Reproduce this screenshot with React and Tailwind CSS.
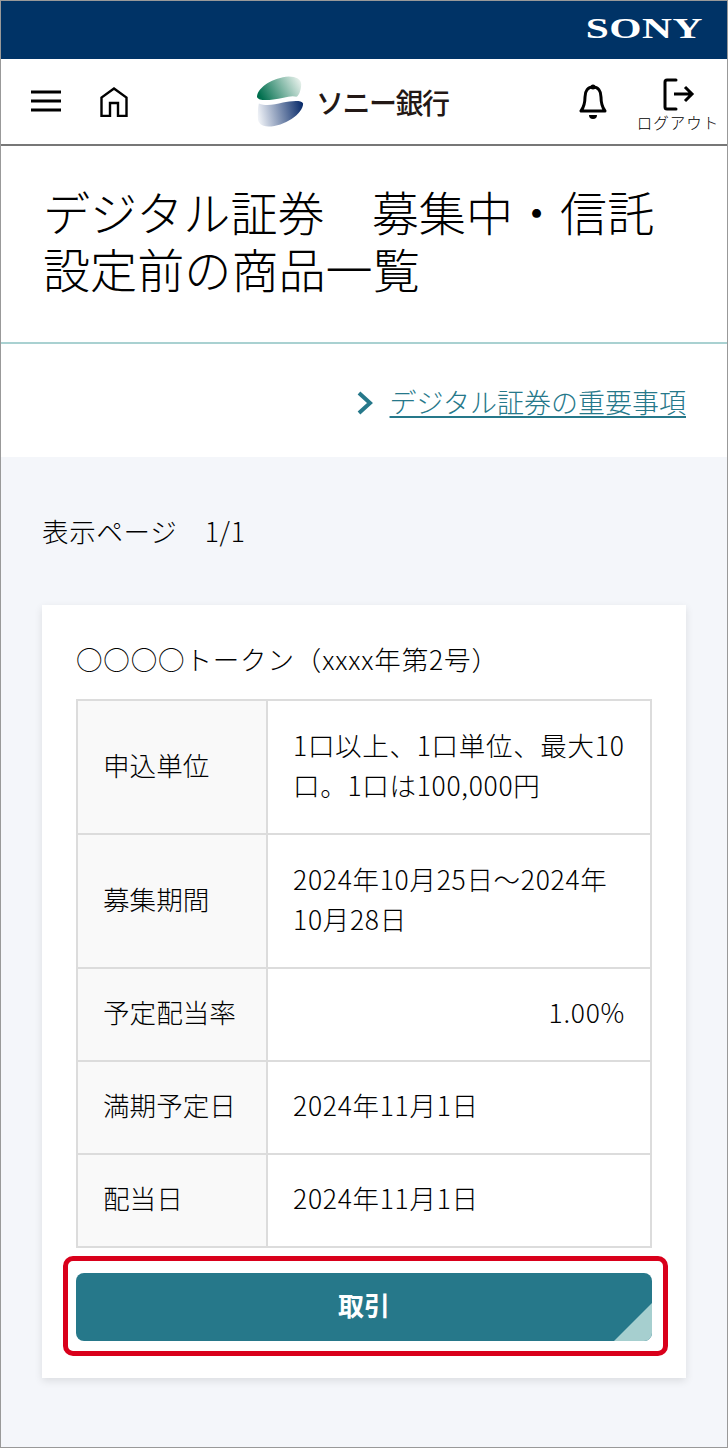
import React from 'react'

const rows = [
  { label: '申込単位', value: '1口以上、1口単位、最大10口。1口は100,000円', h: 'h-[134px]' },
  { label: '募集期間', value: '2024年10月25日～2024年10月28日', h: 'h-[134px]' },
  { label: '予定配当率', value: '1.00%', h: 'h-[93px]', right: true },
  { label: '満期予定日', value: '2024年11月1日', h: 'h-[93px]' },
  { label: '配当日', value: '2024年11月1日', h: 'h-[93px]' },
]

const BankLogo = () => (
  <svg width="50" height="51" viewBox="0 0 52 52">
    <defs>
      <linearGradient id="logoGreen" x1="0" y1="0.6" x2="1" y2="0.3">
        <stop offset="0" stopColor="#006f4e" />
        <stop offset="1" stopColor="#e4efe9" />
      </linearGradient>
      <linearGradient id="logoBlue" x1="0" y1="0.5" x2="1" y2="0.4">
        <stop offset="0" stopColor="#eef1f6" />
        <stop offset="1" stopColor="#0b2d6b" />
      </linearGradient>
    </defs>
    <path d="M1 21C2 11 18 1 34 0c8 0 13 3 13 8 0 5-2 12-5 13-6-2-15 2-24 3C10 25 2 25 1 21z" fill="url(#logoGreen)" />
    <path d="M3 28c8 3 16 1 25-1 7-1 19-3 21 1 0 11-20 24-36 24-8 0-11-4-11-9 0-6 0-12 1-15z" fill="url(#logoBlue)" />
  </svg>
)

export default function App() {
  return (
    <div className="w-[728px] h-[1448px] border border-[#999] bg-[#f4f6fa] text-black font-['Noto_Sans_CJK_JP','Noto_Sans',sans-serif] font-light overflow-hidden">
      {/* Sony bar */}
      <div className="h-[58px] bg-[#003366] flex items-center justify-end pr-[24px] pb-[3px]">
        <span className="font-['Liberation_Serif',serif] font-bold text-[29px] leading-none text-white scale-x-[1.43] origin-right tracking-[0.3px]">SONY</span>
      </div>

      {/* Nav */}
      <div className="h-[87px] bg-white border-b-2 border-[#777] flex items-center relative">
        <svg className="ml-[29px] -mt-[2px]" width="32" height="24" viewBox="0 0 32 24">
          <path d="M1 3h30M1 12h30M1 21h30" stroke="#000" strokeWidth="3" />
        </svg>
        <svg className="ml-[38px] mt-[1px]" width="28" height="30" viewBox="0 0 28 30">
          <path d="M1.5 29V10.500L14 1.500l12.500 9V29H18V16h-8v13z" fill="none" stroke="#000" strokeWidth="2.400" />
        </svg>
        <div className="ml-[128px] flex items-center">
          <BankLogo />
          <span className="ml-[10px] text-[28px] font-medium leading-none text-[#231815] tracking-[-1.500px]">ソニー銀行</span>
        </div>
        <svg className="ml-[130px] mt-[1px]" width="28" height="36" viewBox="0 0 28 36">
          <path d="M14 3c-5 0-8 4-8 10 0 6-1 10-4 14h24c-3-4-4-8-4-14 0-6-3-10-8-10z" fill="none" stroke="#000" strokeWidth="3" strokeLinejoin="round" />
          <circle cx="14" cy="3" r="2.500" fill="#000" />
          <path d="M10 31h8a4 4 0 0 1-8 0z" fill="#000" />
        </svg>
        <div className="absolute right-[8px] top-[19px] w-[82px] flex flex-col items-center">
          <svg className="ml-[2px]" width="32" height="33" viewBox="0 0 32 33">
            <path d="M13 2H4a2 2 0 0 0-2 2v25a2 2 0 0 0 2 2h9" fill="none" stroke="#000" strokeWidth="3" strokeLinecap="round" />
            <path d="M11 16h18M22 9l7 7-7 7" fill="none" stroke="#000" strokeWidth="3" />
          </svg>
          <span className="text-[15.500px] leading-none mt-[4px] tracking-[1px] whitespace-nowrap">ログアウト</span>
        </div>
      </div>

      {/* Title */}
      <div className="h-[198px] bg-white border-b-2 border-[#a9d1d1] pt-[36px] pl-[42px]">
        <h1 className="text-[47.100px] leading-[57px] font-light w-[640px]">デジタル証券　募集中・信託設定前の商品一覧</h1>
      </div>

      {/* Link */}
      <div className="h-[113px] bg-white flex items-start justify-end pr-[41px] pt-[39px]">
        <svg className="mt-[7px] mr-[16px]" width="18" height="26" viewBox="0 0 18 26">
          <path d="M3 3l11 10L3 23" fill="none" stroke="#26788a" strokeWidth="4" />
        </svg>
        <a className="text-[27px] leading-[38px] text-[#26788a] underline underline-offset-[3px] decoration-2">デジタル証券の重要事項</a>
      </div>

      {/* Page info + card */}
      <div className="px-[41px] pt-[54px]">
        <p className="text-[26.500px] leading-[40px] tracking-[0.700px]">表示ページ　1/1</p>
        <div className="mt-[54px] bg-white shadow-[0_3px_8px_rgba(0,0,0,0.1)] h-[773px] px-[34px] pt-[34px]">
          <p className="text-[26.500px] leading-[40px] mb-[20px] tracking-[0.850px]">○○○○トークン（xxxx年第2号）</p>
          <div className="border-2 border-[#dcdcdc] border-b-0">
            {rows.map((row) => (
              <div key={row.label} className={`${row.h} flex border-b-2 border-[#dcdcdc]`}>
                <div className="w-[190px] shrink-0 bg-[#f9f9f9] border-r-2 border-[#dcdcdc] flex items-center pl-[25px] pb-[5px] text-[26.600px]">{row.label}</div>
                <div className={`flex-1 flex items-center pl-[25px] pr-[25px] pb-[5px] text-[26.500px] leading-[40px] tracking-[0.700px] ${row.right ? 'justify-end' : ''}`}>{row.value}</div>
              </div>
            ))}
          </div>
          <div className="relative mt-[25px]">
            <button className="relative overflow-hidden w-full h-[68px] pb-[5px] rounded-[8px] bg-[#26788a] text-white text-[26px] font-bold">
              取引
              <span className="absolute right-0 bottom-0 w-[38px] h-[38px] bg-[#a6cfcf] [clip-path:polygon(100%_0,100%_100%,0_100%)]" />
            </button>
            <div className="absolute -left-[13px] -right-[16px] -top-[17px] -bottom-[15px] border-[5px] border-[#d9001b] rounded-[10px]" />
          </div>
        </div>
      </div>
    </div>
  )
}
